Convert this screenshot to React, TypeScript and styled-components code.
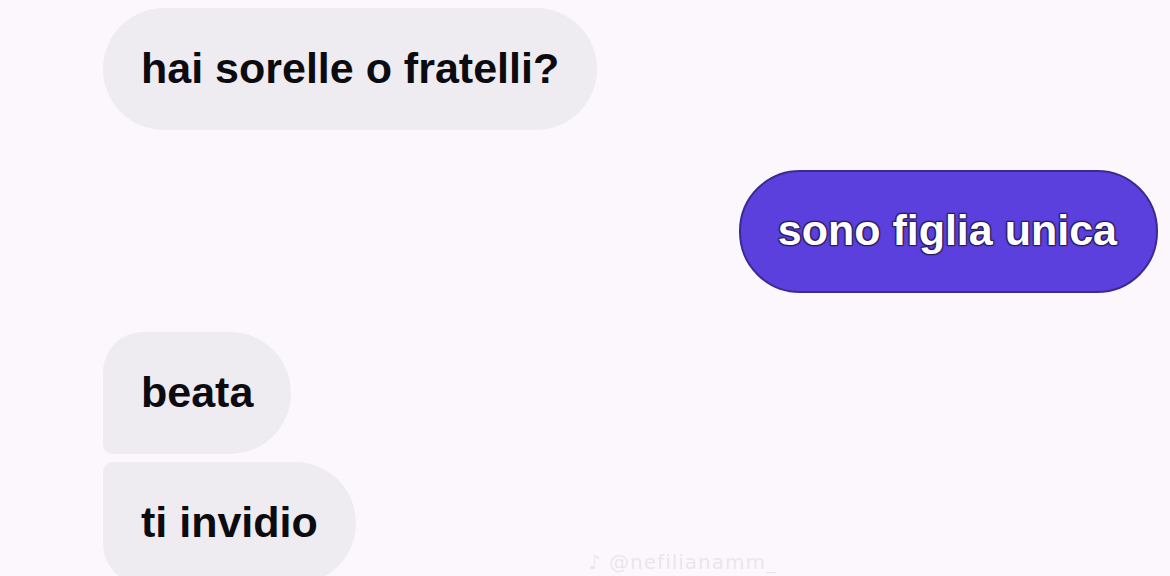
import React from "react";
import styled, { createGlobalStyle, css } from "styled-components";

const Global = createGlobalStyle`
  html, body { margin: 0; padding: 0; background: #fcf7fc; }
  body { font-family: "Liberation Sans", Arial, sans-serif; overflow: hidden; }
`;

const Page = styled.div`
  width: 1170px;
  height: 576px;
  overflow: hidden;
  background: #fcf7fc;
  position: relative;
  box-sizing: border-box;
  padding: 8px 12px 0 103px;
  display: flex;
  flex-direction: column;
`;

const Row = styled.div<{ $mine?: boolean; $gap: number }>`
  display: flex;
  justify-content: ${(p) => (p.$mine ? "flex-end" : "flex-start")};
  margin-top: ${(p) => p.$gap}px;
`;

type Pos = "single" | "first" | "last";

const Bubble = styled.div<{ $mine?: boolean; $pos: Pos }>`
  height: 122px;
  box-sizing: border-box;
  padding: 0 38px 2px 38px;
  display: flex;
  align-items: center;
  border-radius: 61px;
  font-size: 43px;
  font-weight: 700;
  white-space: nowrap;
  color: #0c0c10;
  background: #eeebf1;
  ${(p) =>
    p.$pos === "first" &&
    css`
      border-radius: 40px 61px 61px 10px;
    `}
  ${(p) =>
    p.$pos === "last" &&
    css`
      border-radius: 10px 61px 61px 40px;
    `}
  ${(p) =>
    p.$mine &&
    css`
      height: 123px;
      background: #5b40dd;
      border: 2px solid #3b2a93;
      color: #ffffff;
      padding: 0 39px 2px 37px;
      text-shadow: 0 0 2px #2a1d5a, 1px 1px 1px #2a1d5a, -1px -1px 1px #2a1d5a,
        1px -1px 1px #2a1d5a, -1px 1px 1px #2a1d5a;
    `}
`;

const Watermark = styled.div`
  position: absolute;
  left: 588px;
  bottom: 2px;
  font-size: 20px;
  color: rgba(200, 195, 205, 0.35);
  letter-spacing: 1px;
  font-family: "DejaVu Sans", sans-serif;
`;

export default function App() {
  return (
    <>
      <Global />
      <Page>
        <Row $gap={0}>
          <Bubble $pos="single">hai sorelle o fratelli?</Bubble>
        </Row>
        <Row $mine $gap={40}>
          <Bubble $mine $pos="single">sono figlia unica</Bubble>
        </Row>
        <Row $gap={39}>
          <Bubble $pos="first">beata</Bubble>
        </Row>
        <Row $gap={8}>
          <Bubble $pos="last">ti invidio</Bubble>
        </Row>
        <Watermark>♪ @nefilianamm_</Watermark>
      </Page>
    </>
  );
}
